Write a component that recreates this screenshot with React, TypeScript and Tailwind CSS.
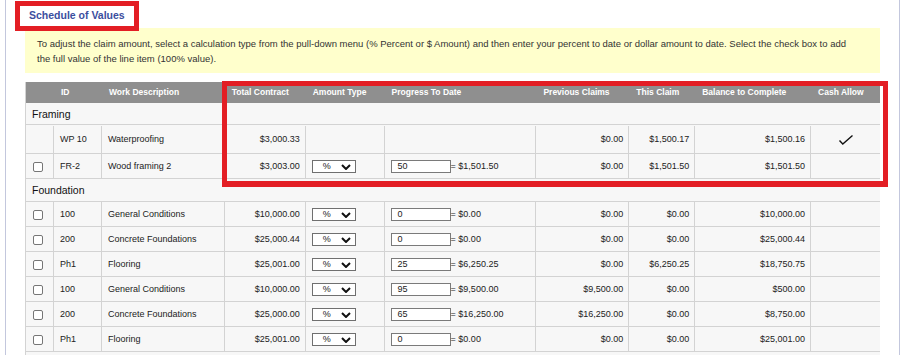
import React from "react";

type Line = {
  check: boolean;
  id: string;
  desc: string;
  total: string;
  pct?: string;
  amount?: string;
  prev: string;
  thisClaim: string;
  balance: string;
  cash?: boolean;
  tall?: boolean;
};

type Group = { name: string; h: string; lines: Line[] };

const groups: Group[] = [
  {
    name: "Framing",
    h: "h-[22px]",
    lines: [
      { check: false, id: "WP 10", desc: "Waterproofing", total: "$3,000.33", prev: "$0.00", thisClaim: "$1,500.17", balance: "$1,500.16", cash: true, tall: true },
      { check: true, id: "FR-2", desc: "Wood framing 2", total: "$3,003.00", pct: "50", amount: "$1,501.50", prev: "$0.00", thisClaim: "$1,501.50", balance: "$1,501.50" },
    ],
  },
  {
    name: "Foundation",
    h: "h-[23px]",
    lines: [
      { check: true, id: "100", desc: "General Conditions", total: "$10,000.00", pct: "0", amount: "$0.00", prev: "$0.00", thisClaim: "$0.00", balance: "$10,000.00" },
      { check: true, id: "200", desc: "Concrete Foundations", total: "$25,000.44", pct: "0", amount: "$0.00", prev: "$0.00", thisClaim: "$0.00", balance: "$25,000.44" },
      { check: true, id: "Ph1", desc: "Flooring", total: "$25,001.00", pct: "25", amount: "$6,250.25", prev: "$0.00", thisClaim: "$6,250.25", balance: "$18,750.75" },
      { check: true, id: "100", desc: "General Conditions", total: "$10,000.00", pct: "95", amount: "$9,500.00", prev: "$9,500.00", thisClaim: "$0.00", balance: "$500.00" },
      { check: true, id: "200", desc: "Concrete Foundations", total: "$25,000.00", pct: "65", amount: "$16,250.00", prev: "$16,250.00", thisClaim: "$0.00", balance: "$8,750.00" },
      { check: true, id: "Ph1", desc: "Flooring", total: "$25,001.00", pct: "0", amount: "$0.00", prev: "$0.00", thisClaim: "$0.00", balance: "$25,001.00" },
    ],
  },
];

const cell = "flex items-center border-r border-[#d3d3d3] h-full pt-[1px]";

function Checkbox() {
  return <span className="block w-[10px] h-[10px] rounded-[2px] border border-[#767676] bg-white" />;
}

function PctSelect() {
  return (
    <div className="flex items-center w-[44px] h-[13px] border border-[#6f6f6f] bg-white">
      <span className="ml-[10px] text-[9px] leading-none">%</span>
      <svg width="10" height="6" viewBox="0 0 10 6" className="ml-[10px]">
        <polyline points="1,1 5,5 9,1" fill="none" stroke="#111" strokeWidth="2" />
      </svg>
    </div>
  );
}

function Row({ line }: { line: Line }) {
  return (
    <div className={`flex border-b border-[#d3d3d3] ${line.tall ? "h-[29px] pt-[1px]" : "h-[25px]"}`}>
      <div className={`${cell} w-[28px] pl-[7px]`}>{line.check && <Checkbox />}</div>
      <div className={`${cell} w-[48px] pl-[6px]`}>{line.id}</div>
      <div className={`${cell} w-[123px] pl-[6px]`}>{line.desc}</div>
      <div className={`${cell} w-[81px] justify-end pr-[5px]`}>{line.total}</div>
      <div className={`${cell} w-[79px] pl-[6px]`}>{line.pct !== undefined && <PctSelect />}</div>
      <div className={`${cell} w-[152px] pl-[6px]`}>
        {line.pct !== undefined && (
          <>
            <div className="w-[60px] h-[13px] border border-[#7a7a7a] bg-white pl-[6px] text-[9px] leading-[11px]">
              {line.pct}
            </div>
            <span>= {line.amount}</span>
          </>
        )}
      </div>
      <div className={`${cell} w-[93px] justify-end pr-[5px]`}>{line.prev}</div>
      <div className={`${cell} w-[66px] justify-end pr-[5px]`}>{line.thisClaim}</div>
      <div className={`${cell} w-[116px] justify-end pr-[5px]`}>{line.balance}</div>
      <div className="flex items-center justify-center w-[69px] h-full">
        {line.cash && (
          <svg width="16" height="12" viewBox="0 0 16 12">
            <polyline points="1.5,6.5 4.8,10 14.5,1.5" fill="none" stroke="#111" strokeWidth="1.4" />
          </svg>
        )}
      </div>
    </div>
  );
}

const headers: [string, string][] = [
  ["", "w-[28px]"],
  ["ID", "w-[48px]"],
  ["Work Description", "w-[123px]"],
  ["Total Contract", "w-[81px]"],
  ["Amount Type", "w-[79px]"],
  ["Progress To Date", "w-[152px]"],
  ["Previous Claims", "w-[93px]"],
  ["This Claim", "w-[66px]"],
  ["Balance to Complete", "w-[116px]"],
  ["Cash Allow", "w-[69px]"],
];

export default function App() {
  return (
    <div className="relative ml-[5px] w-[895px] h-[355px] overflow-hidden border-x border-[#c3c7dd] bg-white font-['Liberation_Sans',Arial,sans-serif] text-[#222]">
      <div className="flex items-center h-[28px] pt-[3px] pl-[23px] text-[10.5px] font-bold text-[#3b4e9e]">
        Schedule of Values
      </div>

      <div className="ml-[19px] w-[855px] h-[45px] bg-[#ffffcc] pt-[8px] px-[12px] text-[9.5px] leading-[15px] text-[#333]">
        To adjust the claim amount, select a calculation type from the pull-down menu (% Percent or $ Amount) and then enter your percent to date or dollar amount to date. Select the check box to add
        <br />
        the full value of the line item (100% value).
      </div>

      <div className="ml-[19px] mt-[9px] w-[855px] border-l border-[#d3d3d3] bg-[#f7f7f7] text-[9px]">
        <div className="flex h-[21px] bg-[#8f8f8f] text-white font-bold text-[8.5px]">
          {headers.map(([label, w], i) => (
            <div key={`h-${i}`} className={`flex items-center pl-[7px] ${w}`}>
              {label}
            </div>
          ))}
        </div>

        {groups.map((g) => (
          <div key={g.name}>
            <div className={`flex items-center border-b border-[#d3d3d3] pl-[6px] pt-[2px] text-[10.5px] text-[#111] ${g.h}`}>
              {g.name}
            </div>
            {g.lines.map((line, i) => (
              <Row key={`${g.name}-${i}`} line={line} />
            ))}
          </div>
        ))}
        <div className="h-[25px]" />
      </div>

      {/* review annotations */}
      <div className="absolute left-[9px] top-[1px] w-[124px] h-[30px] border-[5px] border-[#e31e24]" />
      <div className="absolute left-[216px] top-[81px] w-[666px] h-[106px] border-[5px] border-b-[6px] border-[#e31e24]" />
    </div>
  );
}
